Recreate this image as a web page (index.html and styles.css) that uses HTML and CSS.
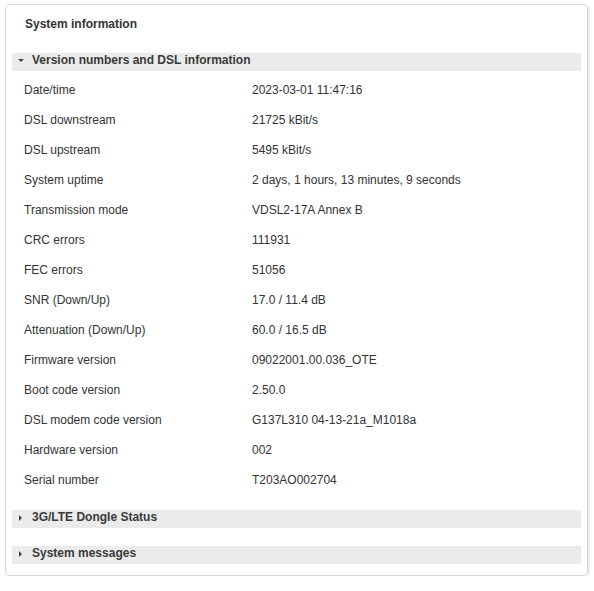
FILE: index.html
```html
<!DOCTYPE html>
<html>
<head>
    <title>System information</title>
    <link rel="stylesheet" href="styles.css">
</head>
<body>
    <div class="card">
        <h2 class="title">System information</h2>
        <!-- version section, expanded -->
        <div class="section expanded">
            <div class="section-head open">
                <span class="arrow"></span>Version numbers and DSL information
            </div>
            <table class="info">
                <tr><td>Date/time</td><td>2023-03-01 11:47:16</td></tr>
                <tr><td>DSL downstream</td><td>21725 kBit/s</td></tr>
                <tr><td>DSL upstream</td><td>5495 kBit/s</td></tr>
                <tr><td>System uptime</td><td>2 days, 1 hours, 13 minutes, 9 seconds</td></tr>
                <tr><td>Transmission mode</td><td>VDSL2-17A Annex B</td></tr>
                <tr><td>CRC errors</td><td>111931</td></tr>
                <tr><td>FEC errors</td><td>51056</td></tr>
                <tr><td>SNR (Down/Up)</td><td>17.0 / 11.4 dB</td></tr>
                <tr><td>Attenuation (Down/Up)</td><td>60.0 / 16.5 dB</td></tr>
                <tr><td>Firmware version</td><td>09022001.00.036_OTE</td></tr>
                <tr><td>Boot code version</td><td>2.50.0</td></tr>
                <tr><td>DSL modem code version</td><td>G137L310 04-13-21a_M1018a</td></tr>
                <tr><td>Hardware version</td><td>002</td></tr>
                <tr><td>Serial number</td><td>T203AO002704</td></tr>
            </table>
        </div>
        <!-- collapsed sections -->
        <div class="section">
            <div class="section-head"><span class="arrow"></span>3G/LTE Dongle Status</div>
        </div>
        <div class="section">
            <div class="section-head"><span class="arrow"></span>System messages</div>
        </div>
    </div>
</body>
</html>
```

FILE: styles.css
```css
body {
    margin: 0;
    background-color: #fff;
    font-family: "Liberation Sans", Arial, sans-serif;
    color: #333;
}
.card {
    width: 569px;
    margin: 4px 0 0 5px;
    padding: 10px 6px 11px 6px;
    border: 1px solid #d6d6d6;
    border-radius: 5px;
    box-shadow: 1px 1px 3px rgba(0, 0, 0, 0.15);
}
.title {
    margin: 1px 0 21px 13px;
    font-size: 12px;
    font-weight: bold;
    line-height: 16px;
}
.section {
    margin-bottom: 18px;
}
.section.expanded {
    margin-bottom: 15px;
}
.section:last-child {
    margin-bottom: 0;
}
.section-head {
    height: 18px;
    line-height: 14px;
    padding-left: 7px;
    background-color: #ebebeb;
    font-size: 12px;
    font-weight: bold;
    color: #3a3a3a;
}
.arrow {
    display: inline-block;
    width: 0;
    height: 0;
    margin-right: 10px;
    vertical-align: middle;
    border-top: 3px solid transparent;
    border-bottom: 3px solid transparent;
    border-left: 3px solid #444;
}
.section-head.open {
    padding-left: 6px;
}
.section-head.open .arrow {
    margin-right: 8px;
    border-left: 3px solid transparent;
    border-right: 3px solid transparent;
    border-top: 3px solid #444;
    border-bottom: 0;
}
.info {
    border-collapse: collapse;
    margin: 4px 0 0 0;
    font-size: 12px;
}
.info td {
    height: 30px;
    padding: 0;
    vertical-align: middle;
}
.info td:first-child {
    width: 228px;
    padding-left: 12px;
}
```
